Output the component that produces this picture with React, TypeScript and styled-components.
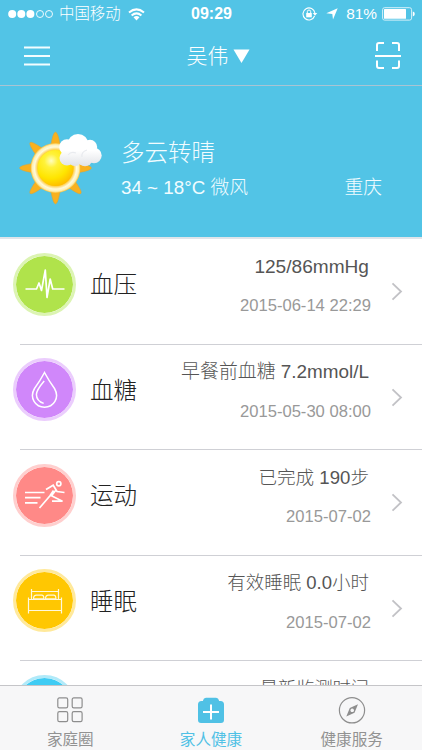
import React from "react";
import styled, { createGlobalStyle } from "styled-components";

const Global = createGlobalStyle`
  * { box-sizing: border-box; }
  body { margin: 0; background: #fff; font-family: "Liberation Sans", "Noto Sans CJK SC", sans-serif; }
  svg { display: block; flex: none; }
`;

const Screen = styled.div`
  width: 422px;
  height: 750px;
  overflow: hidden;
  display: flex;
  flex-direction: column;
  background: #fff;
`;

const StatusBar = styled.div`
  height: 28px;
  flex: none;
  display: grid;
  grid-template-columns: 1fr auto 1fr;
  align-items: center;
  padding: 0 7px 0 8px;
  background: #52c4e6;
  color: #fff;
  font-size: 15px;
`;
const StatusSide = styled.div<{ $end?: boolean }>`
  display: flex;
  align-items: center;
  justify-content: ${(p) => (p.$end ? "flex-end" : "flex-start")};
`;
const Carrier = styled.span`
  margin: 0 7px 0 5px;
  font-size: 15.4px;
  line-height: 28px;
  white-space: nowrap;
  font-weight: 300;
`;
const Clock = styled.b`
  font-size: 16px;
  line-height: 28px;
`;
const Percent = styled.span`
  margin: 0 5px 0 8px;
  font-size: 15.4px;
  line-height: 28px;
`;

const NavBar = styled.header`
  height: 58px;
  flex: none;
  display: grid;
  grid-template-columns: 50px 1fr 50px;
  align-items: center;
  justify-items: center;
  padding: 0 9px 2px 12px;
  background: #52c4e6;
  border-bottom: 1px solid #a9c4d3;
  color: #fff;
`;
const Title = styled.div`
  display: flex;
  align-items: center;
  gap: 4px;
  padding-left: 11px;
  font-size: 21px;
  line-height: 30px;
  font-weight: 300;
`;

const Weather = styled.section`
  height: 153px;
  flex: none;
  display: flex;
  padding: 39px 40px 0 14px;
  background: #52c4e6;
  border-bottom: 2px solid #dfe5ea;
  color: #f1fcff;
`;
const WeatherText = styled.div`
  flex: 1;
  padding-left: 13px;
`;
const Condition = styled.div`
  height: 44px;
  padding-top: 11px;
  font-size: 23.5px;
  line-height: 34px;
  font-weight: 300;
`;
const Detail = styled.div`
  display: flex;
  justify-content: space-between;
  font-size: 18.8px;
  line-height: 38px;
  font-weight: 300;
`;

const List = styled.main`
  flex: 1;
  min-height: 0;
  overflow: hidden;
`;
const Row = styled.article`
  height: 105.5px;
  display: flex;
  padding-left: 13px;
`;
const Badge = styled.div<{ $fill: string; $ring: string }>`
  width: 63px;
  height: 63px;
  margin: 13.5px 0 0 0;
  flex: none;
  display: grid;
  place-items: center;
  border-radius: 50%;
  border: 3px solid ${(p) => p.$ring};
  background: ${(p) => p.$fill};
  background-clip: padding-box;
`;
const RowBody = styled.div`
  flex: 1;
  display: flex;
  margin-left: -56px;
  padding-left: 70px;
  border-bottom: 1px solid #cfd0d5;
`;
const Name = styled.h2`
  margin: 0;
  flex: none;
  font-size: 23.5px;
  font-weight: 300;
  line-height: 92px;
  height: 92px;
  color: #222;
`;
const Reading = styled.div`
  flex: 1;
  text-align: right;
  white-space: nowrap;
`;
const Value = styled.div<{ $size: number }>`
  padding-right: 2px;
  height: 48px;
  padding-top: 12.5px;
  font-size: ${(p) => p.$size}px;
  font-weight: 300;
  line-height: 30px;
  color: #555;
`;
const Time = styled.div`
  font-size: 16.6px;
  line-height: 38px;
  color: #999;
`;
const Arrow = styled.div`
  width: 51px;
  padding: 43px 0 0 20px;
  flex: none;
`;

const TabBar = styled.nav`
  height: 65px;
  flex: none;
  display: grid;
  grid-template-columns: repeat(3, 1fr);
  background: #f7f7f8;
  border-top: 1px solid #c5c5c8;
`;
const Tab = styled.div<{ $active?: boolean }>`
  display: flex;
  flex-direction: column;
  align-items: center;
  padding-top: 11px;
  color: ${(p) => (p.$active ? "#50c1e5" : "#929292")};
  font-size: 15.6px;
  line-height: 25px;
`;
const TabIcon = styled.div`
  height: 30px;
`;

const Signal = () => (
  <svg width="46" height="10" viewBox="0 0 46 10">
    {[4.2, 13.3, 22.4].map((x) => <circle key={x} cx={x} cy="5" r="4" fill="#fff" />)}
    {[32, 41].map((x) => <circle key={x} cx={x} cy="5" r="3.5" fill="none" stroke="#fff" strokeWidth=".9" />)}
  </svg>
);
const Wifi = () => (
  <svg width="17" height="13" viewBox="0 0 17 13" fill="none" stroke="#fff" strokeWidth="2">
    <path d="M1 4.6Q8.5 -1.8 16 4.6M3.6 7.5Q8.5 3.3 13.4 7.5" />
    <path d="M5.5 9.3Q8.5 6.9 11.5 9.3L8.5 12.5Z" fill="#fff" stroke="none" />
  </svg>
);
const Lock = () => (
  <svg width="16" height="14" viewBox="0 0 16 14" fill="none" stroke="#fff">
    <path d="M12.6 9A6 6 0 1 1 12.9 6" strokeWidth="1.1" />
    <path d="M10.7 6h4.6L13 8.8Z" fill="#fff" stroke="none" />
    <rect x="4.2" y="6" width="5.6" height="4.3" fill="#fff" stroke="none" />
    <path d="M5.3 6V4.7a1.7 1.7 0 0 1 3.4 0V6" />
  </svg>
);
const Locate = () => (
  <svg width="12" height="12" viewBox="0 0 12 12"><path d="M11.7.3 7 11.5 6.3 5.9.3 5.3Z" fill="#fff" /></svg>
);
const Battery = () => (
  <svg width="33" height="14" viewBox="0 0 33 14">
    <rect x=".6" y=".7" width="29" height="12.4" rx="2" fill="none" stroke="#d5f0f9" />
    <rect x="2" y="2" width="22" height="9.8" rx=".5" fill="#fff" />
    <path d="M30.8 4.6q2 .5 2 2.4t-2 2.4Z" fill="#fff" />
  </svg>
);
const Menu = () => (
  <svg width="26" height="20" viewBox="0 0 26 20" stroke="#f4fdff" strokeWidth="2"><path d="M0 1.5h26M0 10h26M0 18.5h26" /></svg>
);
const Scan = () => (
  <svg width="26" height="27" viewBox="0 0 26 27" fill="none" stroke="#fff" strokeWidth="2">
    <path d="M2 9V3q0-2 2-2h5M17 1h5q2 0 2 2v6M2 18.5V24q0 2 2 2h5M17 26h5q2 0 2-2v-5.5M0 14h26" />
  </svg>
);
const Caret = () => (
  <svg width="17" height="16" viewBox="0 0 18 16"><path d="M.5 1h17L9 15.5Z" fill="#fff" /></svg>
);

const SunCloud = () => (
  <svg width="94" height="84" viewBox="0 0 94 84">
    <defs>
      <radialGradient id="core" cx=".38" cy=".3" r=".75">
        <stop offset="0" stopColor="#fffdc0" />
        <stop offset=".25" stopColor="#fff23a" />
        <stop offset=".65" stopColor="#ffe500" />
        <stop offset="1" stopColor="#ffb800" />
      </radialGradient>
      <radialGradient id="halo">
        <stop offset=".7" stopColor="#ffc52c" />
        <stop offset=".84" stopColor="#fff9dc" />
        <stop offset=".93" stopColor="#fff0b4" />
        <stop offset="1" stopColor="#f8bd32" />
      </radialGradient>
      <linearGradient id="puff" x1="0" y1="12" x2="0" y2="42" gradientUnits="userSpaceOnUse">
        <stop offset=".45" stopColor="#fff" />
        <stop offset="1" stopColor="#dfe1e6" />
      </linearGradient>
    </defs>
    <g transform="translate(41.5 43)">
      {[0, 45, 90, 135, 180, 225, 270, 315].map((a) => (
        <path key={a} d="M-4.8 -22Q-2.5 -36 0 -36Q2.5 -36 4.8 -22Z" transform={`rotate(${a})`} fill="#f9b11e" stroke="#d8a338" strokeWidth=".5" />
      ))}
      <circle r="25" fill="url(#halo)" />
      <circle r="18" fill="url(#core)" />
    </g>
    <g fill="url(#puff)">
      <circle cx="53" cy="33" r="7.5" />
      <circle cx="61" cy="33.5" r="7.5" />
      <circle cx="71" cy="34" r="7.3" />
      <circle cx="80" cy="30.5" r="7.7" />
      <circle cx="76" cy="22" r="7.2" />
      <circle cx="53" cy="22" r="7.8" />
      <circle cx="64" cy="19.5" r="10.5" />
      <path d="M50 24Q65 16 78 25L80 35Q67 39 52 36Z" />
    </g>
    <path d="M54 30q3-4 8-2m6 4q-1-5 5-7" fill="none" stroke="#e9ebef" strokeWidth="1.2" />
  </svg>
);

const Pulse = () => (
  <svg width="40" height="32" viewBox="0 0 40 32" fill="none" stroke="#fff" strokeWidth="1.7" strokeLinejoin="round">
    <path d="M.5 21H11.5L14 15 16.5 22.5 20.3 2 22 29.5 25.2 11 27.7 21H39.5" />
  </svg>
);
const Drop = () => (
  <svg width="27" height="38" viewBox="0 0 27 38" fill="none" stroke="#fff" strokeWidth="1.5">
    <path d="M13.5 1.5Q18 10 23.5 17.5C29 27 22.5 36.3 13.5 36.3S-2 27 3.5 17.5Q9 10 13.5 1.5Z" />
    <path d="M13.2 10Q5.5 19 5.4 23.5 5.5 30 12.7 32.4" />
  </svg>
);
const Runner = () => (
  <svg width="40" height="30" viewBox="0 0 40 30" fill="none" stroke="#fff" strokeWidth="1.7">
    <path d="M0 12.5h19.5M0 17.7h15.5M0 22.8h12.5M21 9.5 28.2 5.2 32 11.5 39.5 12.5M28.5 10.5 24.8 16 14.5 28M26 15.5 37.5 21.2 27 21.2M31 10 26.7 15.5" />
    <circle cx="33.8" cy="3.7" r="2.1" />
  </svg>
);
const Bed = () => (
  <svg width="36" height="26" viewBox="0 0 36 26" fill="none" stroke="#fff8dc" strokeWidth="1.2">
    <path d="M1.5 9.5v16M34.5 9.5v16M1.5 11.5h33M1.5 22.5h33M4.5 11V1M31.5 11V1M4.5 3.5h27" />
    <path d="M6.5 10.8q0-3.7 3-3.7h5.2q2.2 0 2.2 3.7ZM18.5 10.8q0-3.7 3-3.7h5.2q2.2 0 2.2 3.7Z" />
  </svg>
);
const Chevron = () => (
  <svg width="12" height="19" viewBox="0 0 12 19" fill="none" stroke="#c2c2c6" strokeWidth="1.8"><path d="M1.5 1.3 10 9.5 1.5 17.7" /></svg>
);
const GridIcon = () => (
  <svg width="26" height="26" viewBox="0 0 26 26" fill="none" stroke="#8e8e8e" strokeWidth="1.2">
    {[0.8, 15.2].map((x) => [0.9, 14.6].map((y) => <rect key={`${x}-${y}`} x={x} y={y} width="9.9" height="10" rx="1.6" />))}
  </svg>
);
const Kit = () => (
  <svg width="26" height="27" viewBox="0 0 26 27">
    <path d="M5 4V3.5Q5.5 .8 8 .8h10q2.5 0 3 2.7V4h1.5Q26 4 26 7.5V23q0 3-3 3H3q-3 0-3-3V7.5Q0 4 3.5 4Z" fill="#50c1e5" />
    <path d="M13 7.5v15M5 15h16" stroke="#fff" strokeWidth="2" />
  </svg>
);
const Compass = () => (
  <svg width="28" height="28" viewBox="0 0 28 28" fill="none" stroke="#8e8e8e">
    <circle cx="14" cy="13.3" r="12.6" strokeWidth="1.2" />
    <path fillRule="evenodd" d="M20 7.2 16.5 15.8 8.3 19.5 11.8 11ZM14.2 11.5a1.8 1.8 0 1 0 .01 0Z" fill="#8e8e8e" stroke="none" />
  </svg>
);

const readings = [
  { name: "血压", value: "125/86mmHg", time: "2015-06-14 22:29", fill: "#b0e34b", ring: "#dcf4b3", icon: <Pulse />, size: 19.1 },
  { name: "血糖", value: "早餐前血糖 7.2mmol/L", time: "2015-05-30 08:00", fill: "#d087fa", ring: "#ebcdfd", icon: <Drop />, size: 18.9 },
  { name: "运动", value: "已完成 190步", time: "2015-07-02", fill: "#ff8987", ring: "#ffcfce", icon: <Runner />, size: 18.6 },
  { name: "睡眠", value: "有效睡眠 0.0小时", time: "2015-07-02", fill: "#ffc702", ring: "#ffe99b", icon: <Bed />, size: 18.5 },
  { name: "", value: "最新监测时间", time: "", fill: "#3fccf4", ring: "#b1eaf9", icon: null, size: 18.2 },
];

export default function App() {
  return (
    <Screen>
      <Global />
      <StatusBar>
        <StatusSide><Signal /><Carrier>中国移动</Carrier><Wifi /></StatusSide>
        <Clock>09:29</Clock>
        <StatusSide $end><Lock /><span>&nbsp;&nbsp;</span><Locate /><Percent>81%</Percent><Battery /></StatusSide>
      </StatusBar>
      <NavBar>
        <Menu />
        <Title>吴伟<Caret /></Title>
        <Scan />
      </NavBar>
      <Weather>
        <SunCloud />
        <WeatherText>
          <Condition>多云转晴</Condition>
          <Detail><span>34 ~ 18°C 微风</span><span>重庆</span></Detail>
        </WeatherText>
      </Weather>
      <List>
        {readings.map((r) => (
          <Row key={r.value}>
            <Badge $fill={r.fill} $ring={r.ring}>{r.icon}</Badge>
            <RowBody>
              <Name>{r.name}</Name>
              <Reading>
                <Value $size={r.size}>{r.value}</Value>
                <Time>{r.time}</Time>
              </Reading>
              <Arrow><Chevron /></Arrow>
            </RowBody>
          </Row>
        ))}
      </List>
      <TabBar>
        <Tab><TabIcon><GridIcon /></TabIcon>家庭圈</Tab>
        <Tab $active><TabIcon><Kit /></TabIcon>家人健康</Tab>
        <Tab><TabIcon><Compass /></TabIcon>健康服务</Tab>
      </TabBar>
    </Screen>
  );
}
